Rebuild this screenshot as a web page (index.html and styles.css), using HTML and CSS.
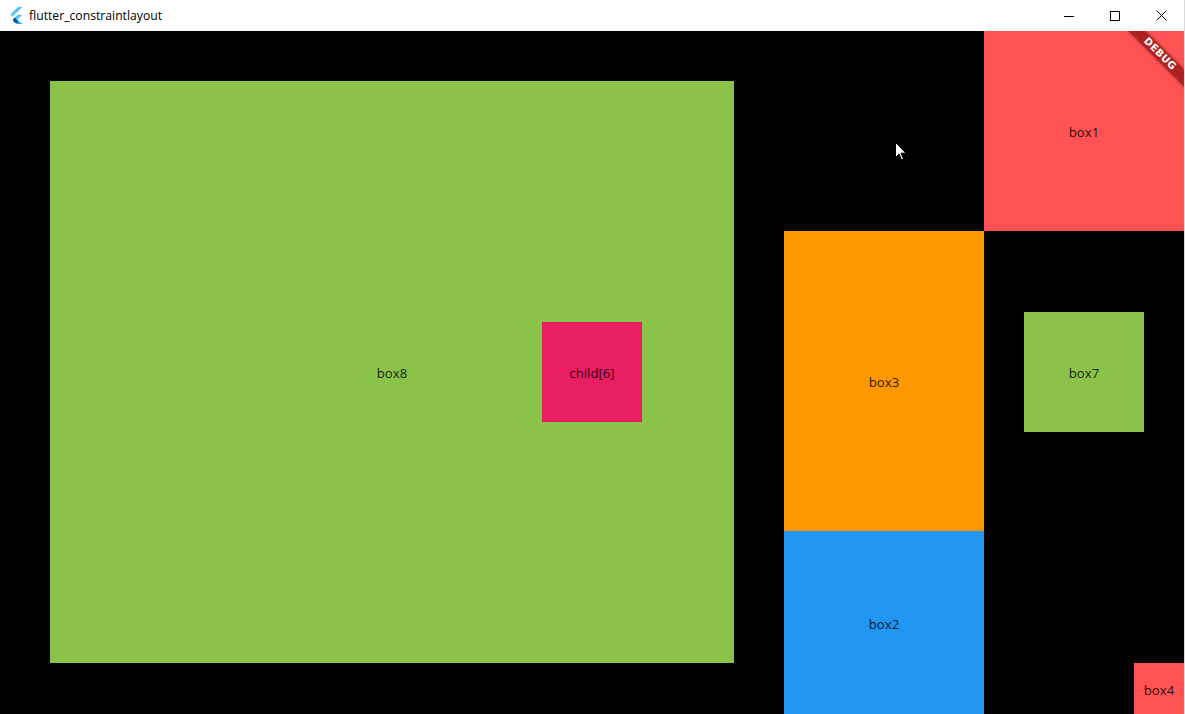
FILE: index.html
```html
<!DOCTYPE html>
<html>
<head>
<meta charset="utf-8">
<link rel="stylesheet" href="styles.css">
</head>
<body>
<div class="window">
  <div class="titlebar">
    <svg class="logo" width="14" height="17" viewBox="0 0 14 17">
      <polygon points="9,0 13.5,0 3.5,9.5 1.2,7.5" fill="#54C5F8"/>
      <polygon points="8.8,7.8 13.5,7.8 8.2,12.8 5.8,10.5" fill="#54C5F8"/>
      <polygon points="5.8,10.5 8.2,12.8 9.8,14.4 9,17 5.6,15.5 3.5,13" fill="#01579B"/>
      <polygon points="8.2,12.8 13.5,17 9,17" fill="#29B6F6"/>
    </svg>
    <span class="title">flutter_constraintlayout</span>
    <div class="controls">
      <div class="ctl"><svg width="10" height="10" viewBox="0 0 10 10"><line x1="0" y1="5.5" x2="10" y2="5.5" stroke="#000" stroke-width="1"/></svg></div>
      <div class="ctl"><svg width="10" height="10" viewBox="0 0 10 10"><rect x="0.5" y="0.5" width="9" height="9" fill="none" stroke="#000" stroke-width="1"/></svg></div>
      <div class="ctl"><svg width="11" height="11" viewBox="0 0 11 11"><path d="M0.5 0.5 L10.5 10.5 M10.5 0.5 L0.5 10.5" stroke="#000" stroke-width="1"/></svg></div>
    </div>
  </div>
  <div class="canvas">
    <div class="box green box8">
      <span class="label">box8</span>
      <div class="box pink child6"><span class="label">child[6]</span></div>
    </div>
    <div class="box red box1">
      <span class="label">box1</span>
      <div class="banner-wrap"><div class="banner">DEBUG</div></div>
    </div>
    <div class="box orange box3"><span class="label">box3</span></div>
    <div class="box blue box2"><span class="label">box2</span></div>
    <div class="box green box7"><span class="label">box7</span></div>
    <div class="box red box4"><span class="label">box4</span></div>
    <svg class="cursor" width="13" height="20" viewBox="0 0 13 20">
      <path d="M0.5 0.5 L0.5 15.5 L4 12 L6.5 18 L8.5 17 L6 11.2 L11 11.2 Z" fill="#fff" stroke="#000" stroke-width="1"/>
    </svg>
  </div>
</div>
</body>
</html>
```
FILE: styles.css
```css
* { box-sizing: border-box; }
html, body { margin: 0; padding: 0; background: #000; }
body { width: 1185px; height: 714px; overflow: hidden; }
.window { width: 1185px; height: 714px; border-right: 1px solid #d9d9d9; background: #000; }
.titlebar {
  height: 31px;
  background: #fff;
  display: flex;
  align-items: center;
  position: relative;
}
.logo { margin-left: 9px; }
.title {
  margin-left: 6px;
  font-family: "Open Sans", "Noto Sans", sans-serif;
  font-size: 12.2px;
  color: #000;
}
.controls { margin-left: auto; display: flex; height: 31px; }
.ctl { width: 46px; height: 31px; display: flex; align-items: center; justify-content: center; }
.canvas {
  position: relative;
  width: 1184px;
  height: 683px;
  display: grid;
  grid-template-columns: 50px 684px 50px 200px 40px 110px 10px 40px;
  grid-template-rows: 50px 150px 81px 120px 99px 132px 51px;
}
.box {
  display: grid;
  place-items: center;
  font-family: "Open Sans", "Noto Sans", sans-serif;
  font-size: 13.2px;
  color: rgba(0,0,0,0.85);
}
.label { grid-area: 1 / 1; padding-top: 2px; }
.green { background: #8BC34A; }
.pink { background: #E91E63; }
.red { background: #FF5252; }
.orange { background: #FF9800; }
.blue { background: #2196F3; }
.box8 { grid-column: 2 / 3; grid-row: 2 / 7; }
.child6 { grid-area: 1 / 1; width: 100px; height: 100px; margin-left: 400px; }
.box1 { grid-column: 5 / 9; grid-row: 1 / 3; position: relative; }
.box3 { grid-column: 4 / 5; grid-row: 3 / 6; }
.box2 { grid-column: 4 / 5; grid-row: 6 / 8; }
.box7 { grid-column: 6 / 8; grid-row: 4 / 5; }
.box4 { grid-column: 7 / 9; grid-row: 7 / 8; }
.banner-wrap {
  position: absolute;
  top: 0; right: 0;
  width: 80px; height: 80px;
  overflow: hidden;
}
.banner {
  position: absolute;
  left: 6px; top: 17px;
  width: 100px; height: 12px;
  transform: rotate(45deg);
  background: rgba(168, 30, 30, 0.92);
  box-shadow: 0 0 3px rgba(0,0,0,0.45);
  color: #fff;
  font-family: "DejaVu Sans", sans-serif;
  font-weight: bold;
  font-size: 10px;
  line-height: 12px;
  text-align: center;
  letter-spacing: 0.4px;
}
.cursor { position: absolute; left: 895px; top: 111px; }
```
